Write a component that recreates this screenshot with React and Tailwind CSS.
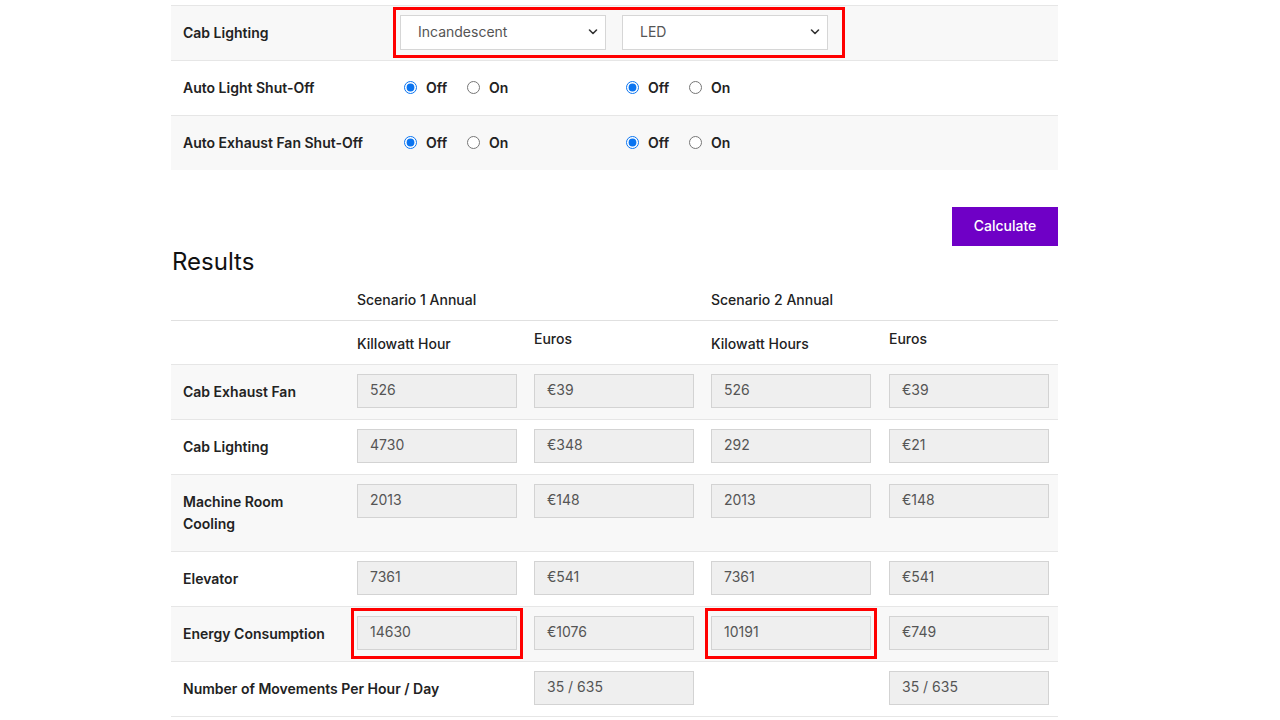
const font = { fontFamily: 'Inter, "Noto Sans", sans-serif' };

const Chevron = () => (
  <svg className="absolute right-[8px] top-1/2 -translate-y-1/2 pointer-events-none" width="10" height="7" viewBox="0 0 10 7" fill="none">
    <path d="M1.5 1.5 L5 5 L8.5 1.5" stroke="#333" strokeWidth="1.6" strokeLinecap="round" strokeLinejoin="round" />
  </svg>
);

const Select = ({ value }) => (
  <div className="relative w-[206px] h-[35px]">
    <select
      defaultValue={value}
      className="appearance-none w-full h-full bg-white border border-[#d6d6d6] pl-[17px] pb-[2px] text-[14px] text-[#555] outline-none"
    >
      <option>{value}</option>
    </select>
    <Chevron />
  </div>
);

const RadioPair = ({ name }) => (
  <div className="flex items-center pl-[11px] w-[222px]">
    <label className="flex items-center gap-[9px] text-[14px] font-semibold text-[#222]">
      <input type="radio" name={name} defaultChecked className="m-0 w-[13px] h-[13px] accent-[#0a74f0]" />
      Off
    </label>
    <label className="flex items-center gap-[9px] ml-[20px] text-[14px] font-semibold text-[#222]">
      <input type="radio" name={name} className="m-0 w-[13px] h-[13px]" />
      On
    </label>
  </div>
);

const Field = ({ value, marked }) => (
  <div className="relative w-[160px]">
    <div className="h-[34px] bg-[#efefef] border border-[#d3d3d3] pl-[12px] flex items-center text-[14px] text-[#555] leading-none pb-[2px]">
      {value}
    </div>
    {marked && (
      <div className="absolute -left-[6px] -right-[6px] -top-[8px] -bottom-[9px] border-[3px] border-[#ff0000]" />
    )}
  </div>
);

const cols = 'grid grid-cols-[174px_177px_177px_178px_181px]';

const rows = [
  { label: 'Cab Exhaust Fan', v: ['526', '€39', '526', '€39'], gray: true },
  { label: 'Cab Lighting', v: ['4730', '€348', '292', '€21'] },
  { label: 'Machine Room Cooling', v: ['2013', '€148', '2013', '€148'], gray: true },
  { label: 'Elevator', v: ['7361', '€541', '7361', '€541'] },
  { label: 'Energy Consumption', v: ['14630', '€1076', '10191', '€749'], gray: true, marked: true },
];

export default function App() {
  return (
    <div className="min-h-screen bg-white" style={font}>
      <div className="ml-[171px] w-[887px] pt-[5px]">
        {/* settings */}
        <div className="border-t border-[#e6e6e6] bg-[#f8f8f8] h-[55px] flex items-center">
          <div className="w-[222px] pl-3 pb-[2px] text-[14px] font-semibold text-[#222]">Cab Lighting</div>
          <div className="flex items-center gap-4 border-[3px] border-[#ff0000] pl-[4px] pr-[14px] h-[51px] -mt-[2px]">
            <Select value="Incandescent" />
            <Select value="LED" />
          </div>
        </div>
        <div className="border-t border-[#e6e6e6] bg-white h-[55px] flex items-center pb-[2px]">
          <div className="w-[222px] pl-3 text-[14px] font-semibold text-[#222]">Auto Light Shut-Off</div>
          <RadioPair name="l1" />
          <RadioPair name="l2" />
        </div>
        <div className="border-t border-[#e6e6e6] bg-[#f8f8f8] h-[55px] flex items-center pb-[2px]">
          <div className="w-[222px] pl-3 text-[14px] font-semibold text-[#222]">Auto Exhaust Fan Shut-Off</div>
          <RadioPair name="f1" />
          <RadioPair name="f2" />
        </div>

        <div className="flex justify-end mt-[37px]">
          <button className="w-[106px] h-[39px] bg-[#6f00c6] text-white text-[14px] font-medium pb-[2px]">Calculate</button>
        </div>

        <h2 className="text-[24px] leading-8 text-[#111] pl-px">Results</h2>

        {/* results */}
        <div className={`${cols} h-[42px] items-center text-[14px] font-medium text-[#222]`}>
          <div />
          <div className="pl-3 col-span-2">Scenario 1 Annual</div>
          <div className="pl-3 col-span-2">Scenario 2 Annual</div>
        </div>
        <div className={`${cols} border-t border-[#e0e0e0] h-[44px] text-[14px] font-medium text-[#222] leading-5`}>
          <div />
          <div className="pl-3 pt-[13px]">Killowatt Hour</div>
          <div className="pl-3 pt-[8px]">Euros</div>
          <div className="pl-3 pt-[13px]">Kilowatt Hours</div>
          <div className="pl-3 pt-[8px]">Euros</div>
        </div>

        {rows.map((r) => (
          <div key={r.label} className={`${cols} border-t border-[#e6e6e6] ${r.gray ? 'bg-[#f8f8f8]' : 'bg-white'}`}>
            <div className="px-3 pt-[16px] pb-[16px] leading-[22px] text-[14px] font-semibold text-[#222]">{r.label}</div>
            {r.v.map((v, i) => (
              <div key={i} className="pl-3 pt-[9px]">
                <Field value={v} marked={r.marked && (i === 0 || i === 2)} />
              </div>
            ))}
          </div>
        ))}

        <div className={`${cols} border-t border-b border-[#e6e6e6] bg-white`}>
          <div className="col-span-2 px-3 pt-[16px] pb-[16px] leading-[22px] text-[14px] font-semibold text-[#222]">
            Number of Movements Per Hour / Day
          </div>
          <div className="pl-3 pt-[9px]">
            <Field value="35 / 635" />
          </div>
          <div />
          <div className="pl-3 pt-[9px]">
            <Field value="35 / 635" />
          </div>
        </div>
      </div>
    </div>
  );
}
